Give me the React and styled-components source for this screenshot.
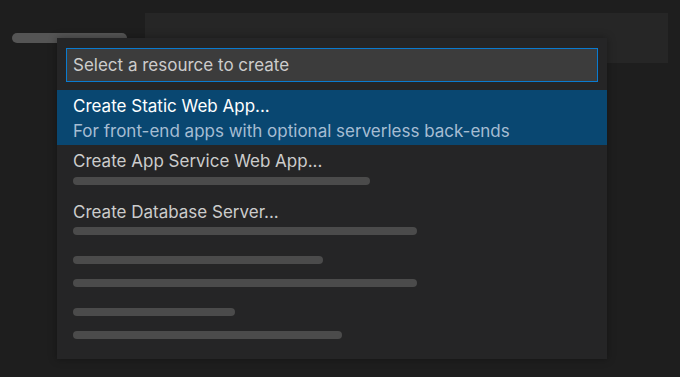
import styled, { createGlobalStyle } from "styled-components";

const GlobalStyle = createGlobalStyle`
  html, body {
    margin: 0;
    padding: 0;
    background: #1e1e1e;
  }
  body {
    font-family: Inter, "Noto Sans", "Liberation Sans", sans-serif;
    -webkit-font-smoothing: antialiased;
  }
`;

const Screen = styled.div`
  position: relative;
  width: 680px;
  height: 377px;
  overflow: hidden;
  background: #1e1e1e;
`;

// editor chrome sitting behind the quick pick
const Backdrop = styled.div`
  display: flex;
  align-items: flex-start;
  padding: 13px 0 0 12px;
  gap: 18px;
`;

const Pill = styled.div`
  width: 115px;
  height: 10px;
  margin-top: 20px;
  border-radius: 5px;
  background: #555555;
`;

const BackPanel = styled.div`
  width: 523px;
  height: 50px;
  background: #262626;
`;

const QuickPick = styled.div`
  position: absolute;
  left: 57px;
  top: 38px;
  width: 550px;
  height: 321px;
  background: #252526;
  box-shadow: 0 0 8px rgba(0, 0, 0, 0.35);
  display: flex;
  flex-direction: column;
`;

const InputWrap = styled.div`
  padding: 10px 9px 8px 9px;
`;

const Input = styled.div`
  box-sizing: border-box;
  height: 34px;
  border: 1.5px solid #0a7bd0;
  background: #3c3c3c;
  color: #cccccc;
  font-size: 17px;
  line-height: 33px;
  padding-left: 6px;
`;

const List = styled.div`
  display: flex;
  flex-direction: column;
`;

const Item = styled.div`
  box-sizing: border-box;
  height: ${(p) => (p.$tall ? 55 : 51)}px;
  padding: 4px 16px 0 16px;
  background: ${(p) => (p.$active ? "#094771" : "transparent")};
`;

const Title = styled.div`
  font-size: 17px;
  line-height: 24px;
  color: ${(p) => (p.$active ? "#ffffff" : "#cccccc")};
  white-space: nowrap;
`;

const Detail = styled.div`
  margin-top: 2px;
  font-size: 17px;
  line-height: 22px;
  color: #a6bdd3;
  white-space: nowrap;
`;

const Bar = styled.div`
  width: ${(p) => p.$w}px;
  height: 8px;
  margin-top: ${(p) => p.$mt}px;
  border-radius: 4px;
  background: #4b4b4b;
`;

export default function App() {
  return (
    <Screen>
      <GlobalStyle />
      <Backdrop>
        <Pill />
        <BackPanel />
      </Backdrop>
      <QuickPick>
        <InputWrap>
          <Input>Select a resource to create</Input>
        </InputWrap>
        <List>
          <Item $active $tall>
            <Title $active>Create Static Web App...</Title>
            <Detail>For front-end apps with optional serverless back-ends</Detail>
          </Item>
          <Item>
            <Title>Create App Service Web App...</Title>
            <Bar $w={297} $mt={4} />
          </Item>
          <Item>
            <Title>Create Database Server...</Title>
            <Bar $w={344} $mt={3} />
          </Item>
          <Item>
            <Bar $w={250} $mt={5} />
            <Bar $w={344} $mt={15} />
          </Item>
          <Item>
            <Bar $w={162} $mt={6} />
            <Bar $w={269} $mt={15} />
          </Item>
        </List>
      </QuickPick>
    </Screen>
  );
}
